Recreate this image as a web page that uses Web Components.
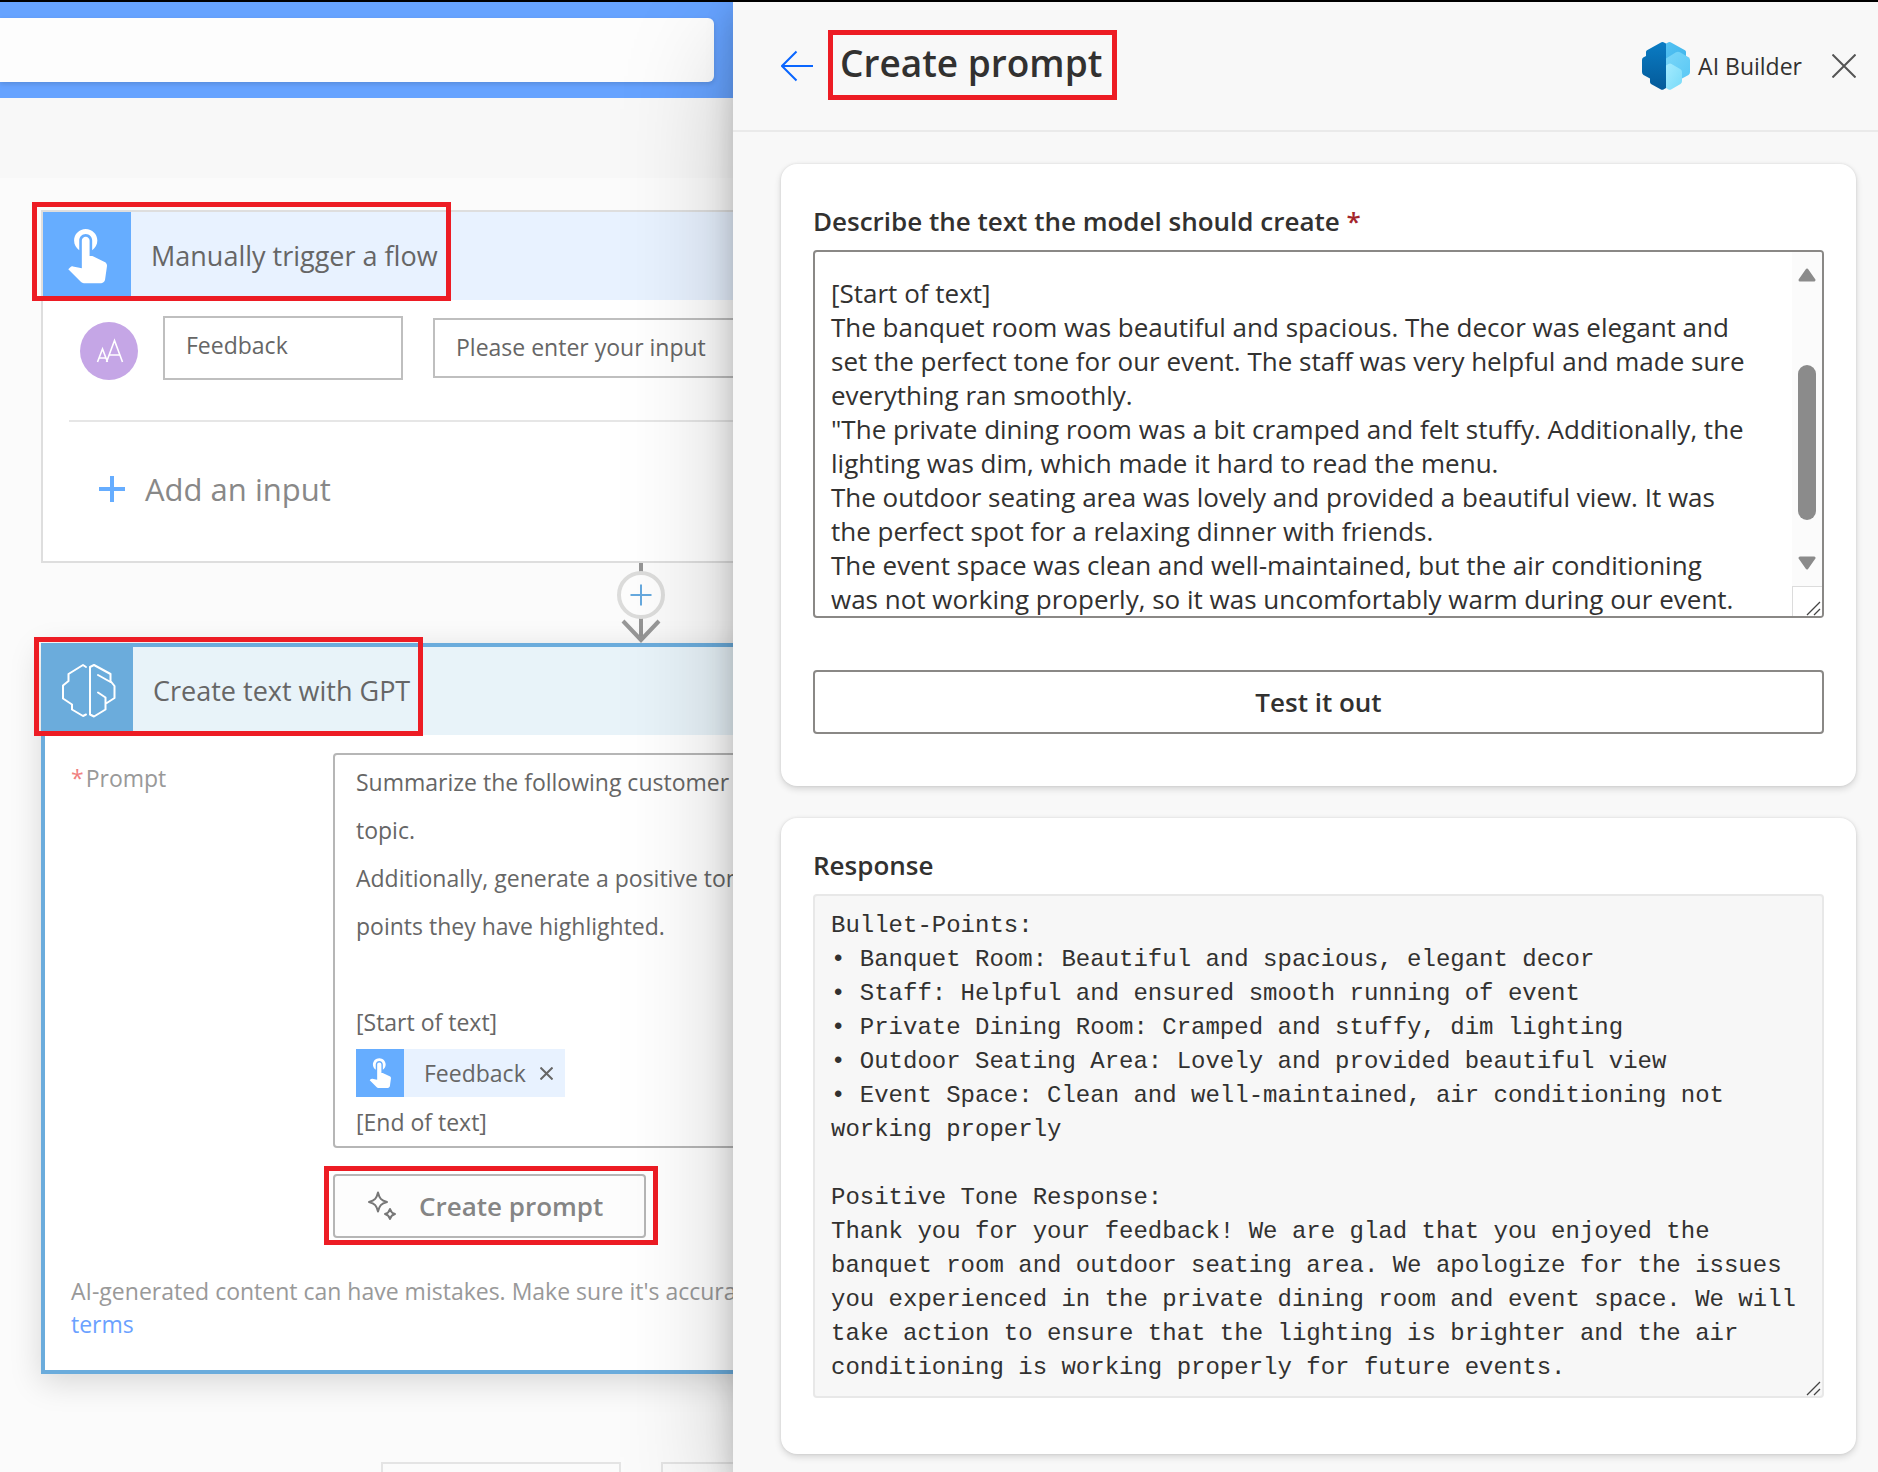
<!DOCTYPE html>
<html lang="en">
<head>
<meta charset="utf-8">
<title>Create prompt - AI Builder</title>
<style>
  html, body { margin: 0; height: 100%; }
  body {
    overflow: hidden;
    background: #fbfbfb;
    font-family: "Open Sans", "Noto Sans", sans-serif;
    color: #323130;
  }
</style>
</head>
<body>
<app-shell>
  <flow-designer slot="designer">
    <flow-card icon="touch" heading="Manually trigger a flow">
      <trigger-inputs></trigger-inputs>
    </flow-card>
    <flow-connector></flow-connector>
    <flow-card icon="brain" heading="Create text with GPT" selected>
      <gpt-fields></gpt-fields>
    </flow-card>
    <flow-footer></flow-footer>
  </flow-designer>
  <prompt-panel slot="panel">
    <panel-card class="describe">
      <prompt-editor></prompt-editor>
    </panel-card>
    <panel-card class="response">
      <response-view></response-view>
    </panel-card>
  </prompt-panel>
</app-shell>

<script>
const base = `
  *, *::before, *::after { box-sizing: border-box; }
  button, input, textarea { font: inherit; color: inherit; margin: 0; border-radius: 0; outline: 0; }
  svg { display: block; flex: none; }
`;

const define = (name, html) => {
  customElements.define(name, class extends HTMLElement {
    constructor() {
      super();
      const t = document.createElement('template');
      t.innerHTML = `<style>${base}</style>` + (typeof html === 'function' ? html(this) : html);
      this.attachShadow({ mode: 'open' }).append(t.content.cloneNode(true));
    }
  });
};

const touchPath = 'M9 11.24V7.5C9 6.12 10.12 5 11.5 5S14 6.12 14 7.5v3.74c1.21-.81 2-2.18 2-3.74C16 5.01 13.99 3 11.5 3S7 5.01 7 7.5c0 1.56.79 2.93 2 3.74zm9.84 4.63l-4.54-2.26c-.17-.07-.35-.11-.54-.11H13v-6c0-.83-.67-1.5-1.5-1.5S10 6.67 10 7.5v10.74l-3.43-.72c-.08-.01-.15-.03-.24-.03-.31 0-.59.13-.79.33l-.79.8 4.94 4.94c.27.27.65.44 1.06.44h6.79c.75 0 1.33-.55 1.44-1.28l.75-5.27c.01-.07.02-.14.02-.2 0-.62-.38-1.16-.91-1.38z';
const touchIcon = size => `<svg width="${size}" height="${size}" viewBox="0 1.5 24 24" fill="#fff" aria-hidden="true"><path d="${touchPath}"/></svg>`;
const brainIcon = `<svg width="56" height="56" viewBox="-1 -1 56 56" fill="none" stroke="#fff" stroke-width="2" stroke-linejoin="round" stroke-linecap="round" aria-hidden="true">
  <path d="M24 3 L21 1 L6.500 10 V17 L1 21.500 V34.500 L10 40.500 V45.500 L21 52 L24 50.500"/>
  <path d="M36 11 L48.500 18 V10 L32 1 L28 3 V50.500 L32 52.500 L43.500 45.500 V33.500 L36 28.500 M48.500 17 L52.500 22 V34 L44 39.500"/></svg>`;
const grip = `<svg class="grip" width="16" height="16" viewBox="0 0 16 16" stroke="#444" stroke-width="1.300" aria-hidden="true"><path d="M1 15 L14 2 M8 15 L14 9"/></svg>`;

/* Red highlight frame drawn over whatever is slotted in */
define('call-out', `
  <style>
    :host { display: flex; position: relative; }
    :host::after {
      content: ""; position: absolute; inset: var(--frame, 0);
      border: 5px solid #ed1c24; pointer-events: none;
    }
  </style><slot></slot>`);

define('app-shell', `
  <style>
    :host {
      display: grid; grid-template-columns: minmax(0, 733fr) minmax(0, 1145fr);
      grid-template-rows: minmax(0, 1fr);
      height: 100vh; border-top: 2px solid #000; box-sizing: border-box;
    }
  </style><slot name="designer"></slot><slot name="panel"></slot>`);

define('flow-designer', `
  <style>
    :host { display: block; overflow: hidden; background: #fbfbfb; }
    header { background: #66a3ff; padding: 16px 19px 16px 0; }
    header div { height: 64px; background: #fdfdfd; border-radius: 0 6px 6px 0; box-shadow: 0 2px 5px rgba(0,0,0,.14); }
    nav { height: 80px; background: #f8f8f8; }
    main { width: 1200px; margin: 32px 0 0 41px; display: flex; flex-direction: column; align-items: stretch; }
  </style>
  <header><div></div></header><nav aria-label="Commands"></nav>
  <main><slot></slot></main>`);

define('flow-card', el => {
  const sel = el.hasAttribute('selected');
  return `
  <style>
    :host { display: block; background: #fff; border: 2px solid #dedede; }
    :host([selected]) { border: 4px solid #6bacdc; box-shadow: 0 8px 30px rgba(0,0,0,.15); }
    .head { display: flex; height: 88px; background: ${sel ? '#e8f3f9' : '#e8f2ff'}; }
    call-out { --frame: -10px 0 -1px -11px; }
    .tile { width: 88px; height: 88px; display: flex; align-items: center; justify-content: center; background: ${sel ? '#6bacdc' : '#66adff'}; }
    h2 { margin: 0; padding: 0 13px 0 20px; font-size: 27px; font-weight: 400; line-height: 88px; color: #666; white-space: nowrap; }
  </style>
  <div class="head"><call-out><div class="tile">${sel ? brainIcon : touchIcon(62)}</div><h2>${el.getAttribute('heading')}</h2></call-out></div>
  <slot></slot>`;
});

define('trigger-inputs', `
  <style>
    :host { display: block; color: #666; }
    .row { display: flex; align-items: flex-end; padding: 16px 26px 40px 37px; }
    .row svg { margin-right: 25px; }
    input { border: 2px solid #bfbfbf; background: #fff; padding: 0 21px; font-size: 23px; }
    #name { width: 240px; height: 64px; padding-bottom: 6px; margin-right: 30px; }
    #value { flex: 1; height: 60px; padding-bottom: 2px; align-self: center; }
    input::placeholder { color: #666; opacity: 1; }
    hr { margin: 0 26px; border: 0; border-top: 2px solid #e6e6e6; }
    button { display: flex; align-items: center; gap: 20px; width: 100%; padding: 47px 0 52px 56px; border: 0; background: none; font-size: 31px; line-height: 40px; color: #888; text-align: left; }
  </style>
  <div class="row">
    <svg width="58" height="58" viewBox="0 0 58 58" fill="none" stroke="#fff" stroke-width="1.600" aria-hidden="true"><circle cx="29" cy="29" r="29" fill="#c5a6e6" stroke="none"/><path d="M17.500 40 L22.500 27 L27.500 40 M19.500 36 H26 M26.500 40 L34.500 18.500 L42.500 40 M29.500 33 H40"/></svg>
    <input id="name" aria-label="Input name" value="Feedback">
    <input id="value" aria-label="Input description" placeholder="Please enter your input">
  </div>
  <hr>
  <button><svg width="26" height="26" viewBox="0 0 26 26" stroke="#66adff" stroke-width="4" aria-hidden="true"><path d="M13 0V26M0 13H26"/></svg>Add an input</button>`);

define('flow-connector', `
  <style>
    :host { display: flex; justify-content: center; }
    button { padding: 0; border: 0; background: none; }
  </style>
  <button aria-label="Insert a step"><svg width="48" height="80" viewBox="0 0 48 80" fill="none" aria-hidden="true">
    <path d="M24 0V10M24 55V76" stroke="#959595" stroke-width="4"/>
    <path d="M6 58 L24 77 L42 58" stroke="#999" stroke-width="4"/>
    <circle cx="24" cy="32" r="22" fill="#fdfdfd" stroke="#dcdcdb" stroke-width="4"/>
    <path d="M24 21.500V42.500M13.500 32H34.500" stroke="#66a9de" stroke-width="2"/></svg></button>`);

define('gpt-fields', `
  <style>
    :host { display: block; padding: 18px 26px 29px; color: #666; font-size: 23px; }
    .field { display: grid; grid-template-columns: 262px minmax(0, 1fr); }
    .label { line-height: 50px; color: #999; }
    .label i { font-style: normal; color: #f08080; margin-right: 2px; }
    .box { border: 2px solid #b6b6b6; border-radius: 4px; padding: 3px 21px 1px; }
    .box p { margin: 0; height: 48px; line-height: 48px; white-space: nowrap; }
    .box p:last-child { height: 45px; line-height: 45px; }
    .token { display: flex; height: 54px; align-items: center; }
    .chip { display: flex; align-items: center; height: 48px; background: #e8f2ff; }
    .chip b { width: 48px; height: 48px; background: #66adff; display: flex; align-items: center; justify-content: center; }
    .chip span { margin: 0 14px 0 20px; }
    .chip button { border: 0; background: none; padding: 0; margin-right: 12px; }
    .actions { display: flex; margin: 26px 0 37px 262px; }
    call-out { --frame: -8px -12px -7px -9px; }
    .create { display: flex; align-items: center; gap: 22px; height: 64px; padding: 0 41px 0 32px; border: 2px solid #b6b6b6; border-radius: 4px; background: #fdfdfd; font-size: 26px; font-weight: 600; color: #858585; white-space: nowrap; }
    .note { margin: 0; line-height: 33px; color: #999; white-space: nowrap; }
    a { color: #6ba1ff; text-decoration: none; }
  </style>
  <div class="field">
    <div class="label" id="prompt-label"><i>*</i>Prompt</div>
    <div class="box" role="textbox" aria-multiline="true" aria-labelledby="prompt-label" tabindex="0">
      <p>Summarize the following customer feedback</p>
      <p>topic.</p>
      <p>Additionally, generate a positive tone</p>
      <p>points they have highlighted.</p>
      <p></p>
      <p>[Start of text]</p>
      <div class="token"><div class="chip"><b>${touchIcon(34)}</b><span>Feedback</span><button aria-label="Remove Feedback"><svg width="13" height="13" viewBox="0 0 13 13" stroke="#666" stroke-width="2" aria-hidden="true"><path d="M.5 .5L12.500 12.500M12.500 .5L.5 12.500"/></svg></button></div></div>
      <p>[End of text]</p>
    </div>
  </div>
  <div class="actions"><call-out><button class="create"><svg width="30" height="30" viewBox="0 0 30 30" fill="none" stroke="#777" stroke-width="2" stroke-linejoin="round" aria-hidden="true">
    <path d="M11 1.500 C12.500 7.500 14 9.500 20 11 C14 12.500 12.500 14.500 11 20.500 C9.500 14.500 8 12.500 2 11 C8 9.500 9.500 7.500 11 1.500Z"/>
    <path d="M23 18 C23.800 21 25 22.200 28 23 C25 23.800 23.800 25 23 28 C22.200 25 21 23.800 18 23 C21 22.200 22.200 21 23 18Z"/></svg>Create prompt</button></call-out></div>
  <p class="note">AI-generated content can have mistakes. Make sure it's accurate<br><a href="#terms">terms</a></p>`);

define('flow-footer', `
  <style>
    :host { display: flex; justify-content: center; gap: 40px; margin-top: 88px; }
    button { width: 240px; height: 64px; border: 2px solid #e4e4e4; background: #fbfbfb; }
  </style><button aria-label="Add step"></button><button aria-label="Save flow"></button>`);

define('prompt-panel', `
  <style>
    :host {
      display: flex; flex-direction: column; position: relative; z-index: 1; background: #f8f8f8;
      box-shadow: 0 46px 104px rgba(0,0,0,.22), 0 9px 26px rgba(0,0,0,.18);
      clip-path: inset(0 0 0 -200px);
    }
    header { display: flex; align-items: center; height: 130px; flex: none; padding: 0 22px 0 48px; border-bottom: 2px solid #eaeaea; }
    button { border: 0; background: none; padding: 0; }
    call-out { margin: 0 0 2px 15px; }
    h1 { margin: 0; padding: 0 15px 4px 12px; font-size: 37px; font-weight: 600; line-height: 66px; white-space: nowrap; }
    .brand { display: flex; align-items: center; gap: 8px; margin: 0 30px 0 auto; font-size: 23px; white-space: nowrap; }
    main { display: flex; flex-direction: column; gap: 32px; padding: 32px 22px 18px 48px; }
  </style>
  <header>
    <button aria-label="Back"><svg width="32" height="32" viewBox="0 0 32 32" fill="none" stroke="#0a66ff" stroke-width="2" aria-hidden="true"><path d="M32 16H1M15.500 1.500L1 16L15.500 30.500"/></svg></button>
    <call-out><h1>Create prompt</h1></call-out>
    <div class="brand">
      <svg width="48" height="48" viewBox="0 0 48 48" aria-hidden="true">
        <defs>
          <linearGradient id="a" x1="0" y1="0" x2="0" y2="1"><stop offset="0" stop-color="#0a7cc4"/><stop offset="1" stop-color="#045a99"/></linearGradient>
          <linearGradient id="b" x1="0" y1="0" x2="1" y2="1"><stop offset="0" stop-color="#54c2f3"/><stop offset="1" stop-color="#3fb4ea"/></linearGradient>
          <linearGradient id="c" x1="0" y1="0" x2="1" y2="1"><stop offset="0" stop-color="#7ad6f8"/><stop offset="1" stop-color="#5ac8f5"/></linearGradient>
          <linearGradient id="d" x1="0" y1="0" x2="1" y2="1"><stop offset="0" stop-color="#a4ebff"/><stop offset="1" stop-color="#78daf8"/></linearGradient>
        </defs>
        <path fill="url(#b)" d="M24 1.500 L26.500 .3 Q28 -.2 29.500 .7 L43 8.300 Q44 9 44 10 V20 L24 24Z"/>
        <path fill="url(#c)" d="M24 16.500 L34 10.300 Q36 9.200 38 10.300 L46.500 15.300 Q48 16.300 48 18 V30 Q48 32 46.500 33 L40 36.500 L24 30Z"/>
        <path fill="url(#d)" d="M24 23.500 L26.500 22 Q28 21 29.500 22 L38.500 27.300 Q40 28.200 40 30 V39 Q40 41 38.500 42 L29.500 47.300 Q28 48.200 26.500 47.500 L24 46Z"/>
        <path fill="url(#a)" d="M24 1.500 L21.500 .3 Q20 -.2 18.500 .7 L5 8.300 Q4 9 4 10 V14 L1.200 15.500 Q0 16.300 0 18 V30 Q0 32 1.500 33 L8 36.500 V40 Q8 41.200 9 42 L18.500 47.300 Q20 48.200 21.500 47.500 L24 46Z"/>
      </svg>
      <span>AI Builder</span>
    </div>
    <button aria-label="Close"><svg width="24" height="24" viewBox="0 0 24 24" stroke="#555" stroke-width="2" aria-hidden="true"><path d="M.5 .5L23.500 23.500M23.500 .5L.5 23.500"/></svg></button>
  </header>
  <main><slot></slot></main>`);

define('panel-card', `
  <style>
    :host { display: block; padding: 0 32px; background: #fff; border-radius: 16px; box-shadow: 0 3px 7px rgba(0,0,0,.14), 0 0 3px rgba(0,0,0,.1); }
    :host(.describe) { padding-top: 40px; padding-bottom: 52px; }
    :host(.response) { padding-top: 30px; padding-bottom: 56px; }
  </style><slot></slot>`);

define('prompt-editor', `
  <style>
    :host { display: flex; flex-direction: column; }
    label { font-size: 26px; font-weight: 600; line-height: 34px; margin-bottom: 12px; }
    label i { font-style: normal; color: #a4262c; }
    .editor { display: flex; height: 368px; border: 2px solid #8a8886; border-radius: 4px; overflow: hidden; }
    textarea { flex: 1; min-width: 0; border: 0; padding: 24px 42px 0 16px; background: none; resize: none; overflow: hidden; font-size: 26px; line-height: 34px; }
    .bar { display: flex; flex-direction: column; align-items: center; width: 30px; background: #fbfbfb; padding-top: 16px; }
    .thumb { width: 18px; height: 155px; margin: 83px 0 36px; border-radius: 9px; background: #8b8b8b; }
    .corner { align-self: stretch; flex: 1; margin-top: 16px; border: solid #dcdcdc; border-width: 1px 0 0 1px; display: flex; align-items: flex-end; justify-content: flex-end; background: #fff; }
    button { margin-top: 52px; height: 64px; border: 2px solid #8a8886; border-radius: 4px; background: #fff; font-size: 26px; font-weight: 600; }
  </style>
  <label for="describe">Describe the text the model should create <i>*</i></label>
  <div class="editor">
    <textarea id="describe" spellcheck="false">[Start of text]
The banquet room was beautiful and spacious. The decor was elegant and set the perfect tone for our event. The staff was very helpful and made sure everything ran smoothly.
"The private dining room was a bit cramped and felt stuffy. Additionally, the lighting was dim, which made it hard to read the menu.
The outdoor seating area was lovely and provided a beautiful view. It was the perfect spot for a relaxing dinner with friends.
The event space was clean and well-maintained, but the air conditioning was not working properly, so it was uncomfortably warm during our event.</textarea>
    <div class="bar" aria-hidden="true">
      <svg width="18" height="14" viewBox="0 0 18 14" fill="#8b8b8b" stroke="#8b8b8b" stroke-width="3" stroke-linejoin="round"><path d="M9 2L16 12H2Z"/></svg>
      <div class="thumb"></div>
      <svg width="18" height="14" viewBox="0 0 18 14" fill="#8b8b8b" stroke="#8b8b8b" stroke-width="3" stroke-linejoin="round"><path d="M9 12L16 2H2Z"/></svg>
      <div class="corner">${grip}</div>
    </div>
  </div>
  <button>Test it out</button>`);

define('response-view', `
  <style>
    :host { display: flex; flex-direction: column; }
    label { font-size: 26px; font-weight: 600; line-height: 34px; margin-bottom: 12px; }
    .box { position: relative; display: flex; height: 504px; }
    textarea { flex: 1; border: 2px solid #e8e8e8; border-radius: 4px; background: #f7f7f7; padding: 13px 16px 0; resize: none; overflow: hidden; font-family: "Liberation Mono", monospace; font-size: 24px; line-height: 34px; }
    .grip { position: absolute; right: 2px; bottom: 2px; }
  </style>
  <label for="response">Response</label>
  <div class="box"><textarea id="response" readonly spellcheck="false">Bullet-Points:
• Banquet Room: Beautiful and spacious, elegant decor
• Staff: Helpful and ensured smooth running of event
• Private Dining Room: Cramped and stuffy, dim lighting
• Outdoor Seating Area: Lovely and provided beautiful view
• Event Space: Clean and well-maintained, air conditioning not working properly

Positive Tone Response:
Thank you for your feedback! We are glad that you enjoyed the banquet room and outdoor seating area. We apologize for the issues you experienced in the private dining room and event space. We will take action to ensure that the lighting is brighter and the air conditioning is working properly for future events.</textarea>${grip}</div>`);
</script>
</body>
</html>
